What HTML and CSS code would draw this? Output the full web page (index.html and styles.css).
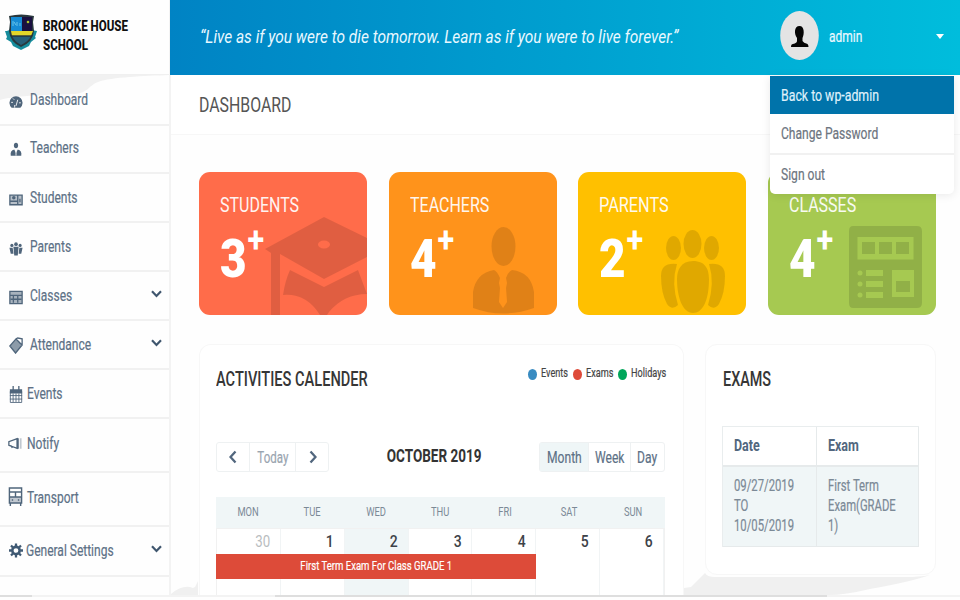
FILE: index.html
```html
<!DOCTYPE html>
<html lang="en">
<head>
<meta charset="utf-8">
<title>Brooke House School</title>
<link rel="stylesheet" href="styles.css">
</head>
<body>
<div class="app">
  <aside class="sidebar">
    <div class="brand">
      <svg class="crest" viewBox="0 0 34 38"><path d="M1 18q4 0 5-2l22 0q2 2 5 2l-2 6 1 1-5 4-2 4-8 4-8-4-2-4-5-3 1-2z" fill="#168c9c"/><path d="M5 3q12-3 25 0l-1 6 1 9q-1 11-13 16Q6 29 5 18l1-9z" fill="#29383d"/><path d="M7 4h11v14H7z" fill="#168bd4"/><path d="M18 4h10v14H18z" fill="#1a1040"/><path d="M7 18h22l-2 5H8z" fill="#e3d62a"/><path d="M8 23h19q-2 5-10 9-7-4-9-9z" fill="#255f78"/><path d="M7 23h21" stroke="#24313a" stroke-width="1.4"/><path d="M9 8v5m1-4 2 3m1-3v4m3-3v3" stroke="#65c3ea" fill="none"/><circle cx="24" cy="9" r="1.3" fill="#adc52c"/></svg>
      <div class="name"><span class="t">BROOKE HOUSE</span><span class="t">SCHOOL</span></div>
    </div>
    <nav>
      <a class="item active"><svg class="shade" viewBox="0 0 170 49" preserveAspectRatio="none"><path d="M0 0H170C145 1 112 2 98 7C88 11 88 18 75 19C50 20 17 20 0 25Z"/></svg><svg class="ico" viewBox="0 0 16 16"><path d="M3 15a7.500 7.500 0 1 1 10 0z"/><path class="cut" d="m8 13 2-7M2.500 9h2m0-4.500 1.500 1.500m5.500 3.500h2M6.500 15v-3"/></svg><span class="t">Dashboard</span></a>
      <a class="item"><svg class="ico" viewBox="0 0 16 16"><ellipse cx="8" cy="3.5" rx="2.4" ry="3.2"/><path d="M2 15q-1-6 4-7l2 4 2-4q5 1 4 7z"/><path class="cut" d="M8 10v5"/></svg><span class="t">Teachers</span></a>
      <a class="item"><svg class="ico" viewBox="0 0 16 16"><path d="M1 3h14v11H1z" opacity=".4"/><path class="ln" d="M1 3h14v11H1zM10 3v11M1 10h9M12.500 7v4"/><circle cx="5.5" cy="6" r="2"/></svg><span class="t">Students</span></a>
      <a class="item"><svg class="ico" viewBox="0 0 16 16"><circle cx="3.3" cy="4.5" r="1.8"/><circle cx="8" cy="3" r="2.100"/><circle cx="12.7" cy="4.5" r="1.8"/><path d="M.500 7h3.700l1 7H2zM5 6h6l-1 10H6zM11.800 7h3.700L14 14h-3z"/></svg><span class="t">Parents</span></a>
      <a class="item"><svg class="ico" viewBox="0 0 16 16"><path d="M1 1h14v14H1z" opacity=".5"/><path class="ln" d="M1 1h14v14H1zM1 5.5h14M2 10h12M5 6v8m5-8v8"/></svg><span class="t">Classes</span><svg class="chev" viewBox="0 0 11 8"><path d="m1 1.3 4.5 4.6L10 1.3"/></svg></a>
      <a class="item"><svg class="ico tall" viewBox="0 0 16 18" preserveAspectRatio="none"><path d="m1 9.500 7-7.500 7 6.500-7.500 8.500z" opacity=".65"/><path class="ln" d="m1 9.500 7-7.500 7 6.500-7.500 8.500zM8 2l2-1 5 1v6M10 4l3 3"/></svg><span class="t">Attendance</span><svg class="chev" viewBox="0 0 11 8"><path d="m1 1.3 4.5 4.6L10 1.3"/></svg></a>
      <a class="item near"><svg class="ico tall" viewBox="0 0 16 16" preserveAspectRatio="none"><path d="M1 3h14v4H1zM4 0h1.5v4H4zM10.5 0H12v4h-1.500z"/><path class="ln thin" d="M1.500 5v10.500h13V5M1 9h14M1 12.300h14M4.700 7v8M8 7v8m3.300-8v8"/></svg><span class="t">Events</span></a>
      <a class="item near notify"><svg class="ico" viewBox="0 0 16 16"><path class="ln" d="M10.500 2.500 1 6v4l9.500 3.500zM3 10l2 3"/><path d="M10 2h2.300v12H10z"/><path d="M13.500 2h2v12h-2z" opacity=".35"/></svg><span class="t">Notify</span></a>
      <a class="item near bus"><svg class="ico tall" viewBox="0 0 16 19" preserveAspectRatio="none"><path class="ln" d="M1.500 1h13v15h-13zM1 5h14M1 10h14M8 5v5M4 13h1.500m5 0H12M2.500 16v3m11-3v3"/><path d="M2 10h12v6H2z" opacity=".35"/></svg><span class="t">Transport</span></a>
      <a class="item gear"><svg class="ico" viewBox="0 0 16 16"><circle cx="8" cy="8" r="4.200" fill="none" stroke="#3f5973" stroke-width="3"/><path class="teeth" d="M8 0v3M8 13v3M0 8h3M13 8h3M2.300 2.300l2.200 2.200M11.500 11.500l2.200 2.200M2.300 13.700l2.200-2.200M11.500 4.500l2.200-2.200"/></svg><span class="t">General Settings</span><svg class="chev" viewBox="0 0 11 8"><path d="m1 1.300 4.500 4.600L10 1.300"/></svg></a>
    </nav>
  </aside>
  <main class="main">
    <header class="top">
      <span class="t quote">“Live as if you were to die tomorrow. Learn as if you were to live forever.”</span>
      <div class="user">
        <svg class="avatar" viewBox="0 0 39 49"><ellipse cx="19.500" cy="24.500" rx="19.300" ry="24.400" fill="#e4e4e4"/><path d="M19.500 15c5 0 5 8 3 12v3q1 2 5 3 1 1 1 3H11q0-3 2-3 4-1 4-3v-3c-3-4-3-12 2.500-12z" fill="#050505"/></svg>
        <span class="t uname">admin</span>
        <i class="caret"></i>
        <div class="menu">
          <a class="on"><span class="t">Back to wp-admin</span></a>
          <a><span class="t">Change Password</span></a>
          <a><span class="t">Sign out</span></a>
        </div>
      </div>
    </header>
    <div class="title"><span class="t">DASHBOARD</span></div>
    <section class="cards">
      <div class="card red"><span class="t lab">STUDENTS</span><span class="t num">3<sup>+</sup></span>
        <svg class="art" viewBox="0 0 168 143"><path fill-rule="evenodd" d="M66 77 125 45l43 21v19l-43 22-44-25v61h-9V81zM119 72.500a6 4 0 1 0 12 0a6 4 0 1 0-12 0z"/><path d="m91 98 34 17 34-17 9 24q-23 0-38 18l-2 3h-7q-14-22-37-20 2-14 7-25z"/></svg></div>
      <div class="card orange"><span class="t lab">TEACHERS</span><span class="t num">4<sup>+</sup></span>
        <svg class="art" viewBox="0 0 168 143"><ellipse cx="114.500" cy="74.500" rx="12" ry="19.500"/><path d="M105 98q3 1 6 8l-1 5 1 5-1 14 4 6 4-6-1-14 1-5-1-5q2-6 6-8 19 2 22 22v16q-31 11-61 0v-16q3-19 21-22z"/></svg></div>
      <div class="card yellow"><span class="t lab">PARENTS</span><span class="t num">2<sup>+</sup></span>
        <svg class="art" viewBox="0 0 168 143"><ellipse cx="95.500" cy="76" rx="7.500" ry="12"/><ellipse cx="114.500" cy="72" rx="9" ry="14"/><ellipse cx="133.500" cy="76" rx="7.500" ry="12"/><path d="M99 92q-16-2-16 12 0 17 6 28 5 7 11 1-7-22-1-41zM131 92q16-2 16 12 0 17-6 28-5 7-11 1 7-22 1-41zM115 89c13 0 16 9 16 18 0 21-6 34-16 34s-16-15-16-34c0-9 4-18 16-18z"/></svg></div>
      <div class="card green"><span class="t lab">CLASSES</span><span class="t num">4<sup>+</sup></span>
        <svg class="art" viewBox="0 0 168 143"><path fill-rule="evenodd" d="M85 54h64q5 0 5 5v72q0 5-5 5H85q-4 0-4-5V59q0-5 4-5zM89.500 65v22.500h56V65zM124 98v27h22V98zM98 98v6h17v-6zM98 109v6h17v-6zM98 120v6h17v-6z"/><path d="M94 70h13v12H94zM111 70h13v12h-13zM128 70h13v12h-13zM128 109h14v11h-14z"/><g class="dots"><circle cx="92" cy="101" r="2.500"/><circle cx="92" cy="112" r="2.500"/><circle cx="92" cy="123" r="2.500"/></g></svg></div>
    </section>
    <section class="panels">
      <div class="panel cal">
        <div class="phead"><h2><span class="t">ACTIVITIES CALENDER</span></h2>
          <div class="legend"><i class="b"></i><span class="t">Events</span><i class="r"></i><span class="t">Exams</span><i class="g"></i><span class="t">Holidays</span></div></div>
        <div class="bar">
          <div class="grp left"><span><svg class="arr" viewBox="0 0 8 14"><path d="M6.500 1.500 1.500 7l5 5.500"/></svg></span><span class="dim"><b class="t">Today</b></span><span><svg class="arr" viewBox="0 0 8 14"><path d="m1.500 1.500 5 5.500-5 5.500"/></svg></span></div>
          <div class="mon"><span class="t">OCTOBER 2019</span></div>
          <div class="grp right"><span class="sel"><b class="t">Month</b></span><span><b class="t">Week</b></span><span><b class="t">Day</b></span></div>
        </div>
        <div class="days"><span class="t">MON</span><span class="t">TUE</span><span class="t">WED</span><span class="t">THU</span><span class="t">FRI</span><span class="t">SAT</span><span class="t">SUN</span></div>
        <div class="week"><div class="out"><span class="t">30</span></div><div><span class="t">1</span></div><div class="today"><span class="t">2</span></div><div><span class="t">3</span></div><div><span class="t">4</span></div><div><span class="t">5</span></div><div><span class="t">6</span></div>
          <div class="event"><span class="t">First Term Exam For Class GRADE 1</span></div></div>
      </div>
      <div class="panel exams">
        <h2><span class="t">EXAMS</span></h2>
        <div class="table">
          <div class="th"><span class="t">Date</span></div><div class="th"><span class="t">Exam</span></div>
          <div class="td"><span class="t">09/27/2019<br>TO<br>10/05/2019</span></div><div class="td"><span class="t">First Term<br>Exam(GRADE<br>1)</span></div>
        </div>
      </div>
    </section>
  </main>
  <svg class="floor" viewBox="0 0 960 40"><path d="M171 34q12-10 22-6l2-1 3-6v14h-27zM684 28l7-1 8-8 6-6q2 4 10 4h190q15 0 25-2-20 7-60 14-25 6-42 6H684z" fill="#f0f0f0"/><path d="M0 35h960v2H0z" fill="#f3f3f3"/><path d="M0 35h32v2H0zM275 35h552v2H275z" fill="#dedede"/></svg>
</div>
</body>
</html>
```
FILE: styles.css
```css
* { box-sizing: border-box; }
body { margin: 0; background: #fefefe; font-family: Roboto, "Liberation Sans", sans-serif; color: #5d7186; }
.app { position: relative; display: grid; grid-template-columns: 171px 789px; width: 960px; height: 600px; overflow: hidden; }
.t { display: inline-block; white-space: nowrap; transform: scaleX(var(--sx, .78)); transform-origin: left center; flex: none; }
.floor { position: absolute; left: 0; top: 560px; width: 960px; height: 40px; }

.sidebar { border-right: 2px solid #f3f3f3; height: 595px; overflow: hidden; }
.brand { display: flex; height: 74px; padding: 13px 0 0 4px; }
.crest { width: 34px; height: 38px; flex: none; }
.name { --sx: .745; display: flex; flex-direction: column; margin: 4px 0 0 5px; color: #101010; font-weight: 800; font-size: 15.500px; line-height: 19px; }
nav { display: grid; grid-template-rows: 51px 48px 49px 49px 49px 49px 49px 54px 54px 50px; border-top: 1px solid #f0f0f0; }
.item { --sx: .75; position: relative; display: flex; align-items: center; padding: 0 0 1px 9px; border-bottom: 2px solid #f1f1f1; font-size: 16px; -webkit-text-stroke: .2px currentColor; }
.item:nth-child(2) { padding-bottom: 3px; }
.item .ico { width: 14px; height: 15px; margin: 4px 7px 0 0; flex: none; fill: #4f657b; position: relative; }
.item .ico.tall { height: 17px; margin-top: 2px; }
.item .t { position: relative; }
.item.near .ico { margin-right: 4px; }
.item.notify { padding-left: 8px; padding-bottom: 4px; }
.item.notify .ico { margin: 0 5px 0 0; }
.item.bus { padding-left: 8px; padding-bottom: 3px; }
.item.bus .ico { height: 19px; width: 15px; margin-top: -3px; }
.item.gear .ico { margin-right: 3px; margin-top: 0; fill: #3f5973; }
.teeth { stroke: #3f5973; stroke-width: 2.600; }
.cut { stroke: #fff; stroke-width: 1; fill: none; }
.ln { stroke: #4f657b; stroke-width: 1.500; fill: none; }
.thin { stroke-width: .9; }
.shade { position: absolute; left: 0; top: 0; width: 170px; height: 49px; fill: #f1f1f1; }
.chev { position: absolute; right: 7px; top: 18px; width: 11px; height: 8px; fill: none; stroke: #3f566e; stroke-width: 2.200; }
.gear .chev { top: 18px; }

.top { position: relative; display: flex; justify-content: space-between; height: 75px; margin-left: -1px; background: linear-gradient(90deg, #0083c4, #00bddc); color: #e9f8ff; }
.quote { --sx: .858; margin-left: 30px; font-size: 18px; font-style: italic; line-height: 73px; width: 480px; }
.user { position: relative; display: flex; width: 180px; height: 75px; }
.avatar { width: 39px; height: 49px; margin-top: 11px; flex: none; }
.uname { --sx: .75; margin-left: 10px; line-height: 73px; font-size: 16px; -webkit-text-stroke: .2px currentColor; }
.caret { position: absolute; right: 16px; top: 34px; border: 4px solid transparent; border-top: 5px solid #fff; border-bottom: 0; }
.menu { --sx: .755; position: absolute; z-index: 3; left: -10px; top: 76px; width: 184px; height: 118px; display: grid; grid-template-rows: 38px 41px 39px; background: #fff; border-radius: 0 0 5px 5px; box-shadow: 0 1px 10px rgba(0,0,0,.09); color: #6d7580; font-size: 16px; overflow: hidden; -webkit-text-stroke: .2px currentColor; }
.menu a { padding-left: 11px; display: flex; align-items: center; border-bottom: 2px solid #f1f1f1; }
.menu a:last-child { border: 0; }
.menu .on { --sx: .77; background: #0073aa; border: 0; color: #dff0fa; }
.title { --sx: .755; height: 60px; padding-left: 28px; line-height: 61px; font-size: 21px; color: #555; background: #fff; border-bottom: 1px solid #f7f7f7; }

.cards { display: grid; grid-template-columns: repeat(4, 168px); column-gap: 21.700px; margin: 37px 0 0 28px; }
.card { position: relative; height: 143px; border-radius: 11px; padding: 21px 0 0 21px; color: #fff; overflow: hidden; display: flex; flex-direction: column; align-items: flex-start; }
.red { background: #ff6c4a; } .orange { background: #ff931b; } .yellow { background: #ffc000; } .green { background: #a6c951; }
.lab { font-size: 20.500px; line-height: 24px; opacity: .92; }
.yellow .lab { --sx: .795; }
.num { --sx: .85; font-size: 54px; font-weight: 900; line-height: 54px; margin-top: 15px; display: flex; }
.num sup { font-size: 36px; font-weight: 700; line-height: 34px; margin: -9px 0 0 1px; }
.art { position: absolute; left: 0; top: 0; width: 168px; height: 143px; fill: rgba(0,0,0,.12); }
.dots { fill: #a6c951; }

.panels { display: grid; grid-template-columns: 485px 231px; column-gap: 21px; margin: 29px 0 0 28px; align-items: start; }
.panel { border: 1px solid #f7f7f7; border-radius: 12px; background: #fff; }
.cal { height: 251px; padding: 0 0 0 16px; border-bottom: 0; border-radius: 12px 12px 0 0; overflow: hidden; }
h2 { --sx: .73; margin: 0; font-size: 20px; font-weight: 500; line-height: 24px; color: #363636; padding-top: 22px; }
.phead { display: flex; height: 97px; position: relative; }
.legend { --sx: .76; position: absolute; right: 17px; top: 21px; width: 138px; height: 16px; display: grid; grid-template-columns: 9px 36px 9px 36px 9px 36px; align-items: center; font-size: 12px; color: #444; -webkit-text-stroke: .2px currentColor; }
.legend i { width: 9px; height: 11px; border-radius: 50%; margin-top: 1px; }
.legend .t { margin-left: 4px; position: relative; top: -1px; }
.b { background: #388bc1; } .r { background: #de4a39; } .g { background: #00a65a; }
.bar { display: grid; grid-template-columns: 113px 1fr 126px; width: 449px; height: 30px; }
.grp { --sx: .71; display: grid; border: 1px solid #eef1f2; border-radius: 3px; font-size: 17px; -webkit-text-stroke: .2px currentColor; }
.grp > span { display: flex; align-items: center; justify-content: center; border-right: 1px solid #eef1f2; min-width: 0; }
.grp > span:last-child { border: 0; }
.grp b { font-weight: 400; transform-origin: center; }
.left { grid-template-columns: 33px 46px 33px; }
.right { grid-template-columns: 49px 42px 33px; }
.sel { background: #eff6f7; }
.dim { --sx: .68; color: #9aa5b0; }
.arr { width: 8px; height: 14px; fill: none; stroke: #52677e; stroke-width: 2.300; }
.mon { --sx: .75; display: flex; justify-content: center; font-size: 18px; font-weight: 700; color: #333; line-height: 28px; }
.mon .t { transform-origin: center; }
.days { display: grid; grid-template-columns: repeat(7, 1fr); width: 449px; height: 31px; margin-top: 25px; background: #f0f6f7; font-size: 12px; line-height: 31px; text-align: center; color: #7b8996; }
.days .t { transform-origin: center; }
.week { --sx: .82; position: relative; display: grid; grid-template-columns: repeat(7, 1fr); width: 449px; height: 70px; border: 1px solid #f1f1f1; font-size: 17px; font-weight: 500; color: #3d4248; text-align: right; line-height: 24px; }
.week > div { border-right: 1px solid #f1f4f5; padding-right: 10px; }
.week .t { transform-origin: right center; }
.week .out { --sx: .78; color: #b9bdc0; font-weight: 400; }
.today { background: #f0f6f7; }
.week > .event { --sx: .735; position: absolute; left: -1px; top: 25px; width: 320px; height: 25px; background: #dd4b39; color: #fff; padding: 0; text-align: center; border: 0; font-size: 13px; font-weight: 400; -webkit-text-stroke: .2px currentColor; }
.week .event .t { transform-origin: center; }
.exams { height: 231px; padding-left: 16px; }
.exams h2 { --sx: .72; padding-left: 1px; }
.table { --sx: .705; display: grid; grid-template-columns: 94px 102px; grid-template-rows: 40px 80px; width: 197px; margin-top: 35px; border: 1px solid #e9edee; border-width: 1px 0 0 1px; }
.table > div { border-right: 1px solid #e6eaeb; border-bottom: 1px solid #e6eaeb; padding-left: 11px; font-size: 16px; }
.table .th { --sx: .78; font-weight: 700; line-height: 37px; color: #52677e; border-bottom-width: 2px; }
.table .td { background: #f0f6f7; padding-top: 9px; line-height: 20px; color: #7b8996; -webkit-text-stroke: .2px currentColor; }
```
